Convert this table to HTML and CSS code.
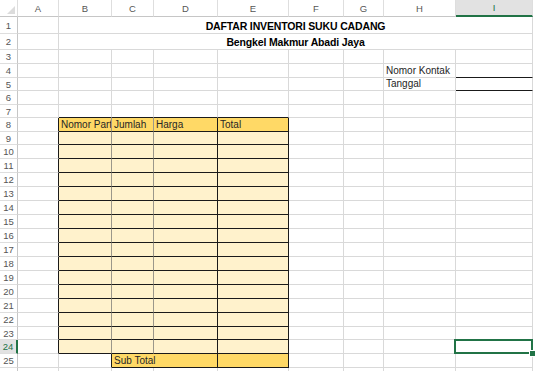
FILE: index.html
```
<!DOCTYPE html>
<html>
<head>
<meta charset="utf-8">
<link rel="stylesheet" href="styles.css">
</head>
<body>
<div class="sheet">
  <div class="r h17"><div class="c ch corner"><span class="tri"></span></div><div class="c ch">A</div><div class="c ch">B</div><div class="c ch">C</div><div class="c ch">D</div><div class="c ch">E</div><div class="c ch">F</div><div class="c ch">G</div><div class="c ch">H</div><div class="c ch selcol">I</div><div class="x"></div></div>
  <div class="r h17"><div class="c rh">1</div><div class="c"></div><div class="c title">DAFTAR INVENTORI SUKU CADANG</div><div class="x"></div></div>
  <div class="r h16"><div class="c rh">2</div><div class="c"></div><div class="c title">Bengkel Makmur Abadi Jaya</div><div class="x"></div></div>
  <div class="r h14"><div class="c rh">3</div><div class="c"></div><div class="c"></div><div class="c"></div><div class="c"></div><div class="c"></div><div class="c"></div><div class="c"></div><div class="c"></div><div class="c"></div><div class="x"></div></div>
  <div class="r h14"><div class="c rh">4</div><div class="c"></div><div class="c"></div><div class="c"></div><div class="c"></div><div class="c"></div><div class="c"></div><div class="c"></div><div class="c">Nomor Kontak</div><div class="c ul"></div><div class="x"></div></div>
  <div class="r h13"><div class="c rh">5</div><div class="c"></div><div class="c"></div><div class="c"></div><div class="c"></div><div class="c"></div><div class="c"></div><div class="c"></div><div class="c">Tanggal</div><div class="c ul"></div><div class="x"></div></div>
  <div class="r h14"><div class="c rh">6</div><div class="c"></div><div class="c"></div><div class="c"></div><div class="c"></div><div class="c"></div><div class="c"></div><div class="c"></div><div class="c"></div><div class="c"></div><div class="x"></div></div>
  <div class="r h13"><div class="c rh">7</div><div class="c"></div><div class="c eb"></div><div class="c eb"></div><div class="c eb"></div><div class="c eb"></div><div class="c"></div><div class="c"></div><div class="c"></div><div class="c"></div><div class="x"></div></div>
  <div class="r h14"><div class="c rh">8</div><div class="c er"></div><div class="c th tg clip">Nomor Part</div><div class="c th tg">Jumlah</div><div class="c th tk">Harga</div><div class="c th tk">Total</div><div class="c"></div><div class="c"></div><div class="c"></div><div class="c"></div><div class="x"></div></div>
  <div class="r h13"><div class="c rh">9</div><div class="c er"></div><div class="c t tg"></div><div class="c t tg"></div><div class="c t tk"></div><div class="c t tk"></div><div class="c"></div><div class="c"></div><div class="c"></div><div class="c"></div><div class="x"></div></div>
  <div class="r h14"><div class="c rh">10</div><div class="c er"></div><div class="c t tg"></div><div class="c t tg"></div><div class="c t tk"></div><div class="c t tk"></div><div class="c"></div><div class="c"></div><div class="c"></div><div class="c"></div><div class="x"></div></div>
  <div class="r h14"><div class="c rh">11</div><div class="c er"></div><div class="c t tg"></div><div class="c t tg"></div><div class="c t tk"></div><div class="c t tk"></div><div class="c"></div><div class="c"></div><div class="c"></div><div class="c"></div><div class="x"></div></div>
  <div class="r h14"><div class="c rh">12</div><div class="c er"></div><div class="c t tg"></div><div class="c t tg"></div><div class="c t tk"></div><div class="c t tk"></div><div class="c"></div><div class="c"></div><div class="c"></div><div class="c"></div><div class="x"></div></div>
  <div class="r h14"><div class="c rh">13</div><div class="c er"></div><div class="c t tg"></div><div class="c t tg"></div><div class="c t tk"></div><div class="c t tk"></div><div class="c"></div><div class="c"></div><div class="c"></div><div class="c"></div><div class="x"></div></div>
  <div class="r h14"><div class="c rh">14</div><div class="c er"></div><div class="c t tg"></div><div class="c t tg"></div><div class="c t tk"></div><div class="c t tk"></div><div class="c"></div><div class="c"></div><div class="c"></div><div class="c"></div><div class="x"></div></div>
  <div class="r h14"><div class="c rh">15</div><div class="c er"></div><div class="c t tg"></div><div class="c t tg"></div><div class="c t tk"></div><div class="c t tk"></div><div class="c"></div><div class="c"></div><div class="c"></div><div class="c"></div><div class="x"></div></div>
  <div class="r h14"><div class="c rh">16</div><div class="c er"></div><div class="c t tg"></div><div class="c t tg"></div><div class="c t tk"></div><div class="c t tk"></div><div class="c"></div><div class="c"></div><div class="c"></div><div class="c"></div><div class="x"></div></div>
  <div class="r h14"><div class="c rh">17</div><div class="c er"></div><div class="c t tg"></div><div class="c t tg"></div><div class="c t tk"></div><div class="c t tk"></div><div class="c"></div><div class="c"></div><div class="c"></div><div class="c"></div><div class="x"></div></div>
  <div class="r h14"><div class="c rh">18</div><div class="c er"></div><div class="c t tg"></div><div class="c t tg"></div><div class="c t tk"></div><div class="c t tk"></div><div class="c"></div><div class="c"></div><div class="c"></div><div class="c"></div><div class="x"></div></div>
  <div class="r h14"><div class="c rh">19</div><div class="c er"></div><div class="c t tg"></div><div class="c t tg"></div><div class="c t tk"></div><div class="c t tk"></div><div class="c"></div><div class="c"></div><div class="c"></div><div class="c"></div><div class="x"></div></div>
  <div class="r h14"><div class="c rh">20</div><div class="c er"></div><div class="c t tg"></div><div class="c t tg"></div><div class="c t tk"></div><div class="c t tk"></div><div class="c"></div><div class="c"></div><div class="c"></div><div class="c"></div><div class="x"></div></div>
  <div class="r h14"><div class="c rh">21</div><div class="c er"></div><div class="c t tg"></div><div class="c t tg"></div><div class="c t tk"></div><div class="c t tk"></div><div class="c"></div><div class="c"></div><div class="c"></div><div class="c"></div><div class="x"></div></div>
  <div class="r h14"><div class="c rh">22</div><div class="c er"></div><div class="c t tg"></div><div class="c t tg"></div><div class="c t tk"></div><div class="c t tk"></div><div class="c"></div><div class="c"></div><div class="c"></div><div class="c"></div><div class="x"></div></div>
  <div class="r h13"><div class="c rh">23</div><div class="c er"></div><div class="c t tg"></div><div class="c t tg"></div><div class="c t tk"></div><div class="c t tk"></div><div class="c"></div><div class="c"></div><div class="c"></div><div class="c"></div><div class="x"></div></div>
  <div class="r h14"><div class="c rh selrow">24</div><div class="c er"></div><div class="c t tg"></div><div class="c t tg"></div><div class="c t tk"></div><div class="c t tk"></div><div class="c"></div><div class="c"></div><div class="c"></div><div class="c sel"></div><div class="x"></div></div>
  <div class="r h14"><div class="c rh">25</div><div class="c"></div><div class="c er"></div><div class="c th tk span2">Sub Total</div><div class="c th tk"></div><div class="c"></div><div class="c"></div><div class="c"></div><div class="c"></div><div class="x"></div></div>
  <div class="r h14"><div class="c rh"></div><div class="c"></div><div class="c"></div><div class="c"></div><div class="c"></div><div class="c"></div><div class="c"></div><div class="c"></div><div class="c"></div><div class="c"></div><div class="x"></div></div>
</div>
</body>
</html>
```
FILE: styles.css
```
html, body {
  margin: 0;
  padding: 0;
  background: #ffffff;
}
.sheet {
  width: 535px;
  height: 371px;
  overflow: hidden;
  font-family: "Liberation Sans", Arial, sans-serif;
  font-size: 10px;
  color: #1e1e1e;
}
.r {
  display: grid;
  grid-template-columns: 18px 41px 53px 42px 64px 71px 55px 40px 72px 77px 2px;
}
.h17 { height: 17px; }
.h16 { height: 16px; }
.h14 { height: 14px; }
.h13 { height: 13px; }
.c {
  box-sizing: border-box;
  border-right: 1px solid #d9d9d9;
  border-bottom: 1px solid #d9d9d9;
  display: flex;
  align-items: flex-end;
  padding: 0 2px 1px 2px;
  line-height: 11px;
  white-space: nowrap;
  min-width: 0;
}
.x { background: #ffffff; }
.ch {
  justify-content: center;
  align-items: center;
  padding: 0;
  color: #555555;
  font-size: 9.5px;
  border-bottom-color: #c6c6c6;
  border-right-color: #dedede;
}
.corner {
  justify-content: flex-end;
  align-items: flex-end;
  padding: 0 2px 2px 0;
}
.tri {
  width: 0;
  height: 0;
  border-left: 8px solid transparent;
  border-bottom: 8px solid #dcdcdc;
}
.selcol {
  background: #e2e2e2;
  color: #217346;
  border-bottom: 2px solid #217346;
}
.rh {
  justify-content: center;
  align-items: center;
  padding: 0;
  color: #555555;
  font-size: 9.5px;
  border-right-color: #c6c6c6;
  border-bottom-color: #dedede;
}
.selrow {
  color: #217346;
  background: #e2e2e2;
  border-right: 2px solid #217346;
}
.title {
  grid-column: span 8;
  justify-content: center;
  font-weight: bold;
  font-size: 10.5px;
  letter-spacing: -0.15px;
  color: #000000;
}
.ul { border-bottom-color: #1a1a1a; }
.eb { border-bottom-color: #1a1a1a; }
.er { border-right-color: #1a1a1a; }
.t {
  background: #fff2cc;
  border-bottom-color: #1a1a1a;
}
.th {
  background: #ffd966;
  border-bottom-color: #1a1a1a;
  color: #262626;
}
.tg { border-right-color: #9b978a; }
.tk { border-right-color: #1a1a1a; }
.clip { overflow: hidden; padding-right: 0; }
.span2 { grid-column: span 2; }
.sel {
  position: relative;
}
.sel::after {
  content: "";
  position: absolute;
  left: -2px;
  top: -1px;
  right: -1px;
  bottom: -1px;
  border: 2px solid #217346;
}
.sel::before {
  content: "";
  position: absolute;
  right: -4px;
  bottom: -4px;
  width: 5px;
  height: 5px;
  background: #217346;
  border: 1px solid #ffffff;
  z-index: 2;
}
```
